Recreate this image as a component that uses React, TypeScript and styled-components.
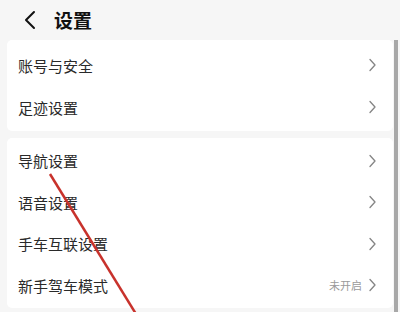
import React from "react";
import styled, { createGlobalStyle } from "styled-components";

const Global = createGlobalStyle`
  html, body { margin: 0; padding: 0; background: #f6f6f6; }
  body { font-family: "Noto Sans CJK SC", "Noto Sans", sans-serif; }
`;

const Page = styled.div`
  position: relative;
  width: 400px;
  height: 312px;
  overflow: hidden;
  background: #f6f6f6;
  padding: 0 7px;
  box-sizing: border-box;
  display: flex;
  flex-direction: column;
  gap: 7px;
`;

const Header = styled.div`
  height: 40px;
  display: flex;
  align-items: center;
  gap: 18px;
  padding-left: 24px;
  box-sizing: border-box;
  margin: 0 -7px -7px;
`;

const Title = styled.div`
  font-size: 19px;
  font-weight: 700;
  color: #111;
  line-height: 1;
  margin-top: -1px;
`;

const Card = styled.div<{ $pt: number; $pb: number; $rh: number }>`
  background: #fff;
  border-radius: 5px;
  display: flex;
  flex-direction: column;
  padding: ${(p) => p.$pt}px 0 ${(p) => p.$pb}px;
  width: 386px;
  --row-h: ${(p) => p.$rh}px;
`;

const Row = styled.div`
  height: var(--row-h);
  display: flex;
  align-items: center;
  padding: 0 16px 0 11px;
`;

const Label = styled.div`
  flex: 1;
  font-size: 15px;
  color: #2a2a2a;
  line-height: 1;
`;

const Value = styled.span`
  font-size: 11px;
  color: #9a9a9a;
  margin-right: 6px;
`;

const ScrollBar = styled.div`
  position: absolute;
  right: 2px;
  top: 40px;
  bottom: 0;
  width: 4px;
  background: #a8a8a8;
`;

const Annotation = styled.svg`
  position: absolute;
  left: 0;
  top: 0;
  pointer-events: none;
`;

const Chevron = () => (
  <svg width="9" height="14" viewBox="0 0 9 14">
    <path d="M2 1.5 L7 7 L2 12.5" fill="none" stroke="#858585" strokeWidth="1.3" strokeLinecap="round" strokeLinejoin="round" />
  </svg>
);

const Back = () => (
  <svg width="12" height="20" viewBox="0 0 12 20">
    <path d="M10 2 L2 10 L10 18" fill="none" stroke="#111" strokeWidth="2" strokeLinecap="round" strokeLinejoin="round" />
  </svg>
);

const group1 = [{ label: "账号与安全" }, { label: "足迹设置" }];
const group2: { label: string; value?: string }[] = [
  { label: "导航设置" },
  { label: "语音设置" },
  { label: "手车互联设置" },
  { label: "新手驾车模式", value: "未开启" },
];

export default function App() {
  return (
    <>
      <Global />
      <Page>
        <Header>
          <Back />
          <Title>设置</Title>
        </Header>
        <Card $pt={4} $pb={3} $rh={42}>
          {group1.map((r) => (
            <Row key={r.label}>
              <Label>{r.label}</Label>
              <Chevron />
            </Row>
          ))}
        </Card>
        <Card $pt={2} $pb={2} $rh={41.5}>
          {group2.map((r) => (
            <Row key={r.label}>
              <Label>{r.label}</Label>
              {r.value && <Value>{r.value}</Value>}
              <Chevron />
            </Row>
          ))}
        </Card>
        <ScrollBar />
        <Annotation width="400" height="312" viewBox="0 0 400 312">
          <line x1="50" y1="174" x2="136" y2="314" stroke="#c8322c" strokeWidth="2.5" />
        </Annotation>
      </Page>
    </>
  );
}
